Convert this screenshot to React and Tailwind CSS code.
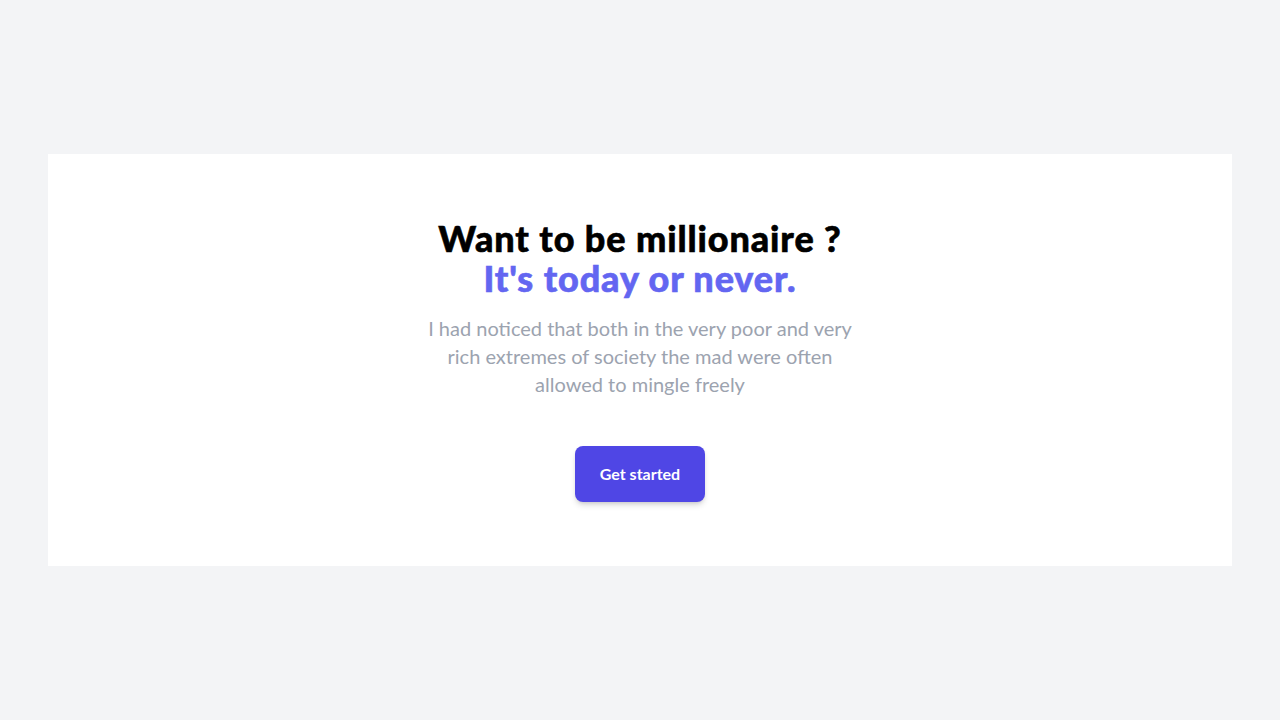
export default function App() {
  return (
    <div className="min-h-screen bg-[#f3f4f6] flex items-center px-12 font-['Lato',sans-serif]">
      <div className="w-full bg-white">
        <div className="text-center w-full mx-auto py-16 px-4">
          <h2 className="text-4xl font-black tracking-[0.9px] text-black [-webkit-text-stroke:0.6px_currentColor]">
            <span className="block">Want to be millionaire ?</span>
            <span className="block text-[#6366f1]">It&apos;s today or never.</span>
          </h2>
          <p className="text-xl mt-4 max-w-md mx-auto text-[#9ca3af]">
            I had noticed that both in the very poor and very rich extremes of society the mad were often allowed to mingle freely
          </p>
          <div className="mt-12 flex justify-center">
            <button type="button" className="py-4 px-[25px] bg-[#4f46e5] text-white text-base font-bold rounded-lg shadow-[0_4px_6px_-1px_rgba(0,0,0,0.15),0_2px_4px_-2px_rgba(0,0,0,0.15)]">
              Get started
            </button>
          </div>
        </div>
      </div>
    </div>
  );
}
